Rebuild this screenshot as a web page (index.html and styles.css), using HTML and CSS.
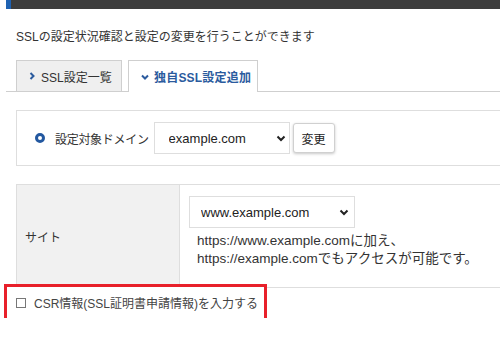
FILE: index.html
```html
<!DOCTYPE html>
<html lang="ja">
<head>
<meta charset="utf-8">
<title>SSL設定</title>
<link rel="stylesheet" href="styles.css">
</head>
<body>
<div class="page">
  <div class="topbar"></div>
  <p class="desc">SSLの設定状況確認と設定の変更を行うことができます</p>
  <div class="tabs">
    <div class="tab">
      <svg class="ico" width="6" height="8" viewBox="0 0 6 8"><polyline points="1.5,1 4.5,4 1.5,7" fill="none" stroke="#2b5b9e" stroke-width="2"/></svg>
      <span>SSL設定一覧</span>
    </div>
    <div class="tab active">
      <svg class="ico" width="8" height="6" viewBox="0 0 8 6"><polyline points="1,1.5 4,4.5 7,1.5" fill="none" stroke="#2b5b9e" stroke-width="2"/></svg>
      <span class="spaced">独自SSL設定追加</span>
    </div>
  </div>

  <div class="domain-box">
    <span class="radio"></span>
    <span class="label">設定対象ドメイン</span>
    <div class="select-wrap sel-domain">
      <select class="select"><option>example.com</option></select>
      <svg class="arrow" width="10" height="7" viewBox="0 0 10 7"><polyline points="1.5,1.5 5,5 8.5,1.5" fill="none" stroke="#222" stroke-width="2"/></svg>
    </div>
    <button class="btn">変更</button>
  </div>

  <div class="table">
    <div class="th">サイト</div>
    <div class="td">
      <div class="select-wrap sel-site">
        <select class="select"><option>www.example.com</option></select>
        <svg class="arrow" width="10" height="7" viewBox="0 0 10 7"><polyline points="1.5,1.5 5,5 8.5,1.5" fill="none" stroke="#222" stroke-width="2"/></svg>
      </div>
      <p class="note">https://www.example.comに加え、<br>https://example.comでもアクセスが可能です。</p>
    </div>
  </div>

  <label class="csr">
    <span class="check"></span>
    <span>CSR情報(SSL証明書申請情報)を入力する</span>
  </label>
</div>
</body>
</html>
```
FILE: styles.css
```css
html, body {
  margin: 0;
  padding: 0;
  background: #fff;
  overflow: hidden;
}
body {
  font-family: "Liberation Sans", "Noto Sans CJK JP", sans-serif;
  color: #333;
  font-size: 12px;
}
.page {
  padding-left: 6px;
  width: 494px;
}
.topbar {
  height: 9px;
  background: #3d3d3d;
  border-left: 5px solid #1f62b2;
}
.desc {
  margin: 0;
  padding: 19px 0 0 10px;
  line-height: 18px;
  font-size: 12px;
}
.tabs {
  margin-top: 14px;
  padding-left: 10px;
  display: flex;
  gap: 6px;
  border-bottom: 1px solid #cfcfcf;
  height: 31px;
  align-items: flex-start;
}
.tab {
  box-sizing: border-box;
  height: 31px;
  border: 1px solid #cfcfcf;
  border-bottom: none;
  background: #efefef;
  display: flex;
  align-items: center;
  gap: 6px;
  padding-left: 12px;
  width: 106px;
  font-size: 12px;
  color: #333;
}
.tab.active {
  background: #fff;
  height: 32px;
  width: 130px;
  color: #2b5b9e;
  font-weight: bold;
  gap: 5px;
}
.ico { display: block; }
.spaced { letter-spacing: 0.2px; }

.domain-box {
  box-sizing: border-box;
  margin: 18px 0 0 10px;
  height: 56px;
  border: 1px solid #dedede;
  border-right: none;
  display: flex;
  align-items: center;
  padding-left: 18px;
}
.radio {
  box-sizing: border-box;
  width: 10px;
  height: 10px;
  border: 3px solid #2358a0;
  border-radius: 50%;
  margin-right: 10px;
}
.label {
  font-size: 12px;
  color: #333;
  margin-right: 5px;
  letter-spacing: -0.3px;
}
.select-wrap {
  position: relative;
}
.select {
  -webkit-appearance: none;
  appearance: none;
  box-sizing: border-box;
  border: 1px solid #dedede;
  border-radius: 0;
  background: #fff;
  font-family: "Liberation Sans", "Noto Sans CJK JP", sans-serif;
  font-size: 13px;
  color: #222;
  height: 32px;
  display: block;
  outline: none;
}
.sel-domain .select {
  width: 136px;
  padding-left: 14px;
}
.sel-domain .arrow {
  position: absolute;
  right: 4px;
  top: 13px;
}
.btn {
  margin-left: 3px;
  box-sizing: border-box;
  height: 30px;
  width: 42px;
  border: 1px solid #d0d0d0;
  border-radius: 3px;
  background: #fff;
  box-shadow: 0 1px 3px rgba(0,0,0,0.22);
  font-family: "Liberation Sans", "Noto Sans CJK JP", sans-serif;
  font-size: 12px;
  color: #222;
  padding: 0;
}

.table {
  box-sizing: border-box;
  margin: 18px 0 0 10px;
  height: 104px;
  border: 1px solid #dedede;
  border-right: none;
  display: flex;
}
.th {
  box-sizing: border-box;
  width: 163px;
  background: #f1f1f1;
  border-right: 1px solid #dedede;
  display: flex;
  align-items: center;
  padding-left: 8px;
  font-size: 12px;
}
.td {
  padding: 11px 0 0 9px;
}
.sel-site .select {
  width: 166px;
  padding-left: 11px;
}
.sel-site .arrow {
  position: absolute;
  left: 150px;
  top: 13px;
}
.note {
  margin: 4px 0 0 8px;
  line-height: 18px;
  font-size: 13.5px;
  color: #333;
}

.csr {
  box-sizing: border-box;
  margin: -1px 0 0 1px;
  width: 257px;
  height: 31px;
  position: relative;
  background: #fff;
  outline: 3px solid #e8202a;
  display: flex;
  align-items: center;
  padding-left: 9px;
  gap: 8px;
  font-size: 12px;
  color: #444;
}
.check {
  box-sizing: border-box;
  width: 10px;
  height: 10px;
  border: 1px solid #777;
  background: #fff;
}
```
